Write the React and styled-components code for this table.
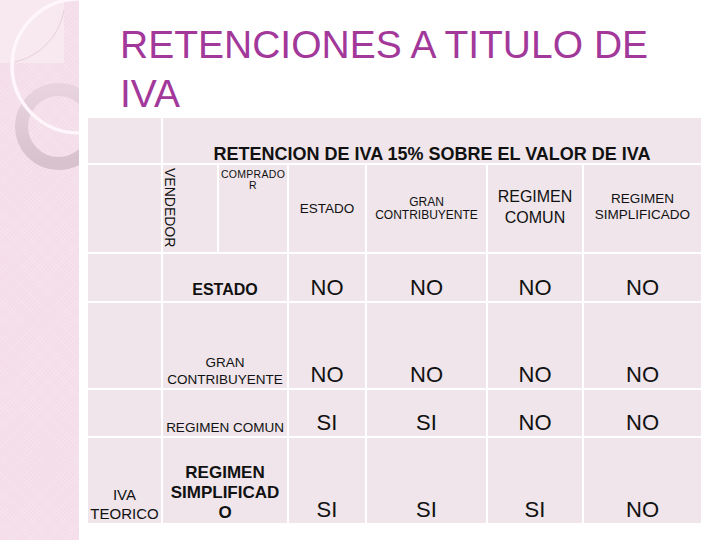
import React from "react";
import styled, { createGlobalStyle } from "styled-components";

const Global = createGlobalStyle`
  html, body { margin: 0; padding: 0; background: #ffffff; }
  body { font-family: "Liberation Sans", Arial, sans-serif; }
`;

const Page = styled.div`
  width: 720px;
  height: 540px;
  display: flex;
  overflow: hidden;
  background: #ffffff;
`;

const Sidebar = styled.aside`
  flex: 0 0 79px;
  height: 540px;
  background-color: #f4dde8;
  background-image: repeating-linear-gradient(45deg, rgba(255,255,255,0.12) 0 1px, transparent 1px 3px),
    repeating-linear-gradient(-45deg, rgba(255,255,255,0.12) 0 1px, transparent 1px 3px);
  overflow: hidden;
`;

const Main = styled.main`
  flex: 1;
  display: flex;
  flex-direction: column;
  padding-left: 9px;
`;

const Title = styled.h1`
  margin: 20px 0 0 32px;
  max-width: 560px;
  font-family: "Liberation Sans", Arial, sans-serif;
  font-weight: normal;
  font-size: 39px;
  line-height: 49px;
  color: #a3389b;
`;

const Grid = styled.div`
  display: grid;
  grid-template-columns: 73px 54px 68px 76px 119px 94px 117px;
  grid-template-rows: 45px 87px 47px 85px 46px 85px;
  gap: 2px;
  width: 613px;
  background: #ffffff;
`;

const vmap = { start: "flex-start", center: "center", end: "flex-end" };

const Cell = styled.div`
  grid-column: ${(p) => p.$col || "auto"};
  background: #efe5ea;
  display: flex;
  flex-direction: column;
  justify-content: ${(p) => vmap[p.$v || "end"]};
  align-items: center;
  text-align: center;
  box-sizing: border-box;
  padding: ${(p) => p.$pad || "0 2px"};
  color: #111111;
  font-family: "Liberation Sans", Arial, sans-serif;
  font-size: ${(p) => p.$size || 13}px;
  line-height: ${(p) => p.$lh || 1.2};
  font-weight: ${(p) => (p.$bold ? "bold" : "normal")};
  letter-spacing: ${(p) => p.$ls || "0"};
  overflow-wrap: anywhere;
  overflow: visible;
`;

const VerticalCell = styled.div`
  background: #efe5ea;
  box-sizing: border-box;
  padding: 3px 0 0 0;
`;

const VerticalText = styled.span`
  display: block;
  writing-mode: vertical-rl;
  font-family: "Liberation Sans", Arial, sans-serif;
  font-size: 14px;
  line-height: 14px;
  color: #111111;
`;

const Value = styled(Cell)`
  font-size: 22px;
  line-height: 22px;
  padding-bottom: 2px;
`;

const Decoration = () => (
  <svg width="79" height="540" viewBox="0 0 79 540">
    <defs>
      <linearGradient id="ringGrad" x1="0" y1="0" x2="0" y2="1">
        <stop offset="0" stopColor="#e6d2dc" />
        <stop offset="1" stopColor="#d4bec9" />
      </linearGradient>
    </defs>
    <rect x="0" y="0" width="64" height="63" fill="#f8e9f0" />
    <path d="M64 10 A64 64 0 0 1 15 62" fill="none" stroke="#e2c7d4" strokeWidth="0.8" />
    <circle cx="58.5" cy="126.5" r="37" fill="none" stroke="url(#ringGrad)" strokeWidth="13" opacity="0.9" />
    <circle cx="79" cy="66" r="67" fill="none" stroke="#fef6fa" strokeWidth="3.5" />
  </svg>
);

const rows = [
  { label: "ESTADO", bold: true, size: 16, lh: "16px", pad: "0 2px 3px", values: ["NO", "NO", "NO", "NO"] },
  { label: "GRAN CONTRIBUYENTE", size: 13.5, lh: "16.5px", pad: "0 1px 0", values: ["NO", "NO", "NO", "NO"] },
  { label: "REGIMEN COMUN", size: 13.5, lh: "16.5px", pad: "0 1px 0", values: ["SI", "SI", "NO", "NO"] },
];

export default function App() {
  return (
    <>
      <Global />
      <Page>
        <Sidebar>
          <Decoration />
        </Sidebar>
        <Main>
          <Title>RETENCIONES A TITULO DE IVA</Title>
          <Grid>
            <Cell />
            <Cell $col="2 / 8" $bold $size={18} $lh="18px" $pad="0">
              RETENCION DE IVA 15% SOBRE EL VALOR DE IVA
            </Cell>

            <Cell />
            <VerticalCell>
              <VerticalText>VENDEDOR</VerticalText>
            </VerticalCell>
            <Cell $v="start" $size={10.5} $lh="11px" $ls="0.3px" $pad="4px 1px 0">COMPRADOR</Cell>
            <Cell $v="center" $size={13.5} $lh="16px">ESTADO</Cell>
            <Cell $v="center" $size={12} $lh="13px">GRAN CONTRIBUYENTE</Cell>
            <Cell $v="center" $size={16} $lh="21px" $pad="0 4px 4px">REGIMEN COMUN</Cell>
            <Cell $v="center" $size={13.5} $lh="16px" $pad="0 2px 3px">REGIMEN SIMPLIFICADO</Cell>

            {rows.map((r) => (
              <React.Fragment key={r.label}>
                <Cell />
                <Cell $col="2 / 4" $bold={r.bold} $size={r.size} $lh={r.lh} $pad={r.pad}>
                  {r.label}
                </Cell>
                {r.values.map((v, i) => (
                  <Value key={i}>{v}</Value>
                ))}
              </React.Fragment>
            ))}

            <Cell $size={15} $lh="18.5px" $pad="0">IVA TEORICO</Cell>
            <Cell $col="2 / 4" $bold $size={17} $lh="20px" $pad="0 3px 0">REGIMEN SIMPLIFICADO</Cell>
            <Value>SI</Value>
            <Value>SI</Value>
            <Value>SI</Value>
            <Value>NO</Value>
          </Grid>
        </Main>
      </Page>
    </>
  );
}
